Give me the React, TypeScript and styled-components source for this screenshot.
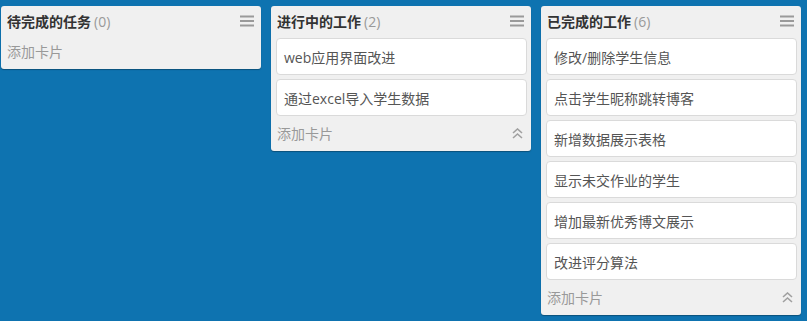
import React from "react";
import styled, { createGlobalStyle } from "styled-components";

const GlobalStyle = createGlobalStyle`
  html, body {
    margin: 0;
    padding: 0;
    background: #0e73b0;
  }
  body {
    font-family: "Open Sans", "Noto Sans CJK SC", sans-serif;
  }
`;

const Board = styled.div`
  display: flex;
  align-items: flex-start;
  gap: 10px;
  padding: 6px 0 0 1px;
  min-height: 321px;
  box-sizing: border-box;
`;

const Column = styled.section`
  width: 260px;
  background: #f0f0f0;
  border-radius: 3px;
  box-shadow: 0 1px 1px rgba(0, 0, 0, 0.3);
  padding: 0 4px 0 5px;
  box-sizing: border-box;
`;

const Header = styled.header`
  display: flex;
  align-items: center;
  justify-content: space-between;
  height: 32px;
  padding: 0 3px 2px 1px;
  box-sizing: border-box;
`;

const Title = styled.h3`
  margin: 0;
  font-size: 14px;
  font-weight: 700;
  color: #333;
  font-family: "Noto Sans CJK SC", sans-serif;
`;

const Count = styled.span`
  font-weight: 400;
  color: #999;
  margin-left: 3px;
  font-family: "Open Sans", "Noto Sans CJK SC", sans-serif;
`;

const Card = styled.div`
  height: 37px;
  display: flex;
  align-items: center;
  background: #fff;
  border: 1px solid #dadada;
  border-radius: 4px;
  padding: 0 7px;
  margin-bottom: 4px;
  box-sizing: border-box;
  font-size: 14px;
  color: #555;
`;

const Footer = styled.footer`
  display: flex;
  align-items: center;
  justify-content: space-between;
  height: 31px;
  padding: 0 4px 5px 1px;
  box-sizing: border-box;
`;

const AddCard = styled.span`
  font-size: 14px;
  color: #999;
  font-family: "Noto Sans CJK SC", sans-serif;
`;

const MenuIcon = () => (
  <svg width="14" height="12" viewBox="0 0 14 12">
    <g stroke="#9a9a9a" strokeWidth="2">
      <line x1="0" y1="1.5" x2="14" y2="1.5" />
      <line x1="0" y1="6" x2="14" y2="6" />
      <line x1="0" y1="10.5" x2="14" y2="10.5" />
    </g>
  </svg>
);

const CollapseIcon = () => (
  <svg width="11" height="11" viewBox="0 0 11 11">
    <g fill="none" stroke="#a0a0a0" strokeWidth="1.6">
      <polyline points="1,5 5.5,1 10,5" />
      <polyline points="1,10 5.5,6 10,10" />
    </g>
  </svg>
);

type List = { title: string; cards: string[] };

const lists: List[] = [
  { title: "待完成的任务", cards: [] },
  { title: "进行中的工作", cards: ["web应用界面改进", "通过excel导入学生数据"] },
  {
    title: "已完成的工作",
    cards: [
      "修改/删除学生信息",
      "点击学生昵称跳转博客",
      "新增数据展示表格",
      "显示未交作业的学生",
      "增加最新优秀博文展示",
      "改进评分算法",
    ],
  },
];

export default function App() {
  return (
    <>
      <GlobalStyle />
      <Board>
        {lists.map((list) => (
          <Column key={list.title}>
            <Header>
              <Title>
                {list.title}
                <Count>({list.cards.length})</Count>
              </Title>
              <MenuIcon />
            </Header>
            {list.cards.map((c) => (
              <Card key={c}>{c}</Card>
            ))}
            <Footer>
              <AddCard>添加卡片</AddCard>
              {list.cards.length > 0 && <CollapseIcon />}
            </Footer>
          </Column>
        ))}
      </Board>
    </>
  );
}
